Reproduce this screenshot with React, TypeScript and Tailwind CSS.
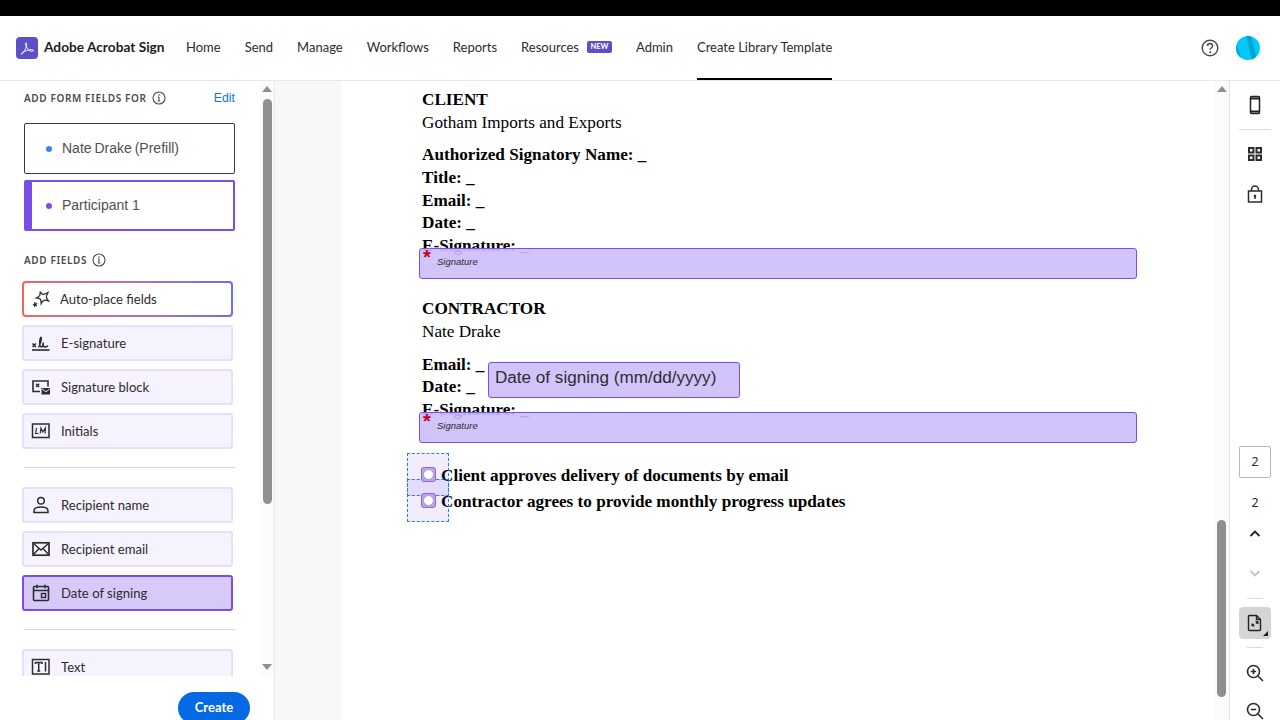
import React from "react";

const clean = "font-['Lato','Noto_Sans',sans-serif]";

const Svg = ({ children, size = 20, className = "" }: { children: React.ReactNode; size?: number; className?: string }) => (
  <svg width={size} height={size} viewBox="0 0 20 20" fill="none" stroke="currentColor" strokeWidth={1.5} className={`shrink-0 ${className}`}>
    {children}
  </svg>
);

const Info = () => (
  <svg width="14" height="14" viewBox="0 0 14 14" fill="none" stroke="#4b4b4b" className="shrink-0">
    <circle cx="7" cy="7" r="6" strokeWidth="1.1" />
    <path d="M7 6v3.6M5.8 10h2.4M5.900 6H7" strokeWidth="1.1" />
    <circle cx="7" cy="4" r="0.8" fill="#4b4b4b" stroke="none" />
  </svg>
);

const icons: Record<string, React.ReactNode> = {
  esig: (
    <Svg>
      <path d="M1 17h17.500" strokeWidth="1.600" />
      <path d="M1.500 10.500l3.500 3.500M5 10.500L1.500 14" strokeWidth="1.500" />
      <path d="M7.500 14.500c1.500-3 3.200-8 2.700-10-.5-1.400-2 3-1.500 6.500.3 2 1 3 2 3s1.300-3 1.600-4.500c-.3 2.500 0 4 1 4.500 1 .3 2.700-.5 3.700-1" strokeWidth="1.400" />
    </Svg>
  ),
  block: (
    <Svg>
      <path d="M9 14.500H2V4h15v5.500" strokeWidth="1.600" />
      <path d="M5 6.800l3.200 3.200M8.200 6.800L5 10" strokeWidth="1.400" />
      <rect x="10.500" y="11" width="8.500" height="6.500" fill="currentColor" stroke="none" />
      <path d="M11 12l4 2.800 3.500-2.800" stroke="#fff" strokeWidth="0.900" />
    </Svg>
  ),
  initials: (
    <Svg>
      <rect x="1.500" y="3" width="16.500" height="13.500" strokeWidth="1.500" />
      <path d="M5.500 7l-.8 5.500h2.800M9.200 12.500l.8-5.500 1.800 4 2.600-4 -.3 5.500" strokeWidth="1.200" />
    </Svg>
  ),
  user: (
    <Svg>
      <circle cx="10" cy="5.800" r="3.300" strokeWidth="1.500" />
      <path d="M3 17.500v-1.500c0-2.500 2.500-4 7-4s7 1.500 7 4v1.500z" strokeWidth="1.500" />
    </Svg>
  ),
  mail: (
    <Svg>
      <rect x="2" y="3.800" width="16" height="12.400" strokeWidth="1.700" />
      <path d="M2.500 4.500L10 11l7.500-6.500M2.500 15.500l5.500-6M17.500 15.500l-5.500-6" strokeWidth="1.400" />
    </Svg>
  ),
  cal: (
    <Svg>
      <rect x="2.500" y="3.500" width="15" height="14" rx="1" strokeWidth="1.600" />
      <path d="M2.500 7.500h15M6 1.800v3.400M14 1.800v3.400" strokeWidth="1.600" />
      <rect x="10.500" y="10.500" width="4" height="4" strokeWidth="1.400" />
    </Svg>
  ),
  text: (
    <Svg>
      <rect x="1.500" y="2.500" width="16.500" height="14.500" strokeWidth="1.500" />
      <path d="M4.500 7V5.500h6.500V7M7.700 5.500v8.500M6.200 14h3M14.500 5v9.500" strokeWidth="1.500" />
    </Svg>
  ),
  auto: (
    <Svg>
      <path d="M9 2.500c.8 1.800 1.800 2.800 3 2.800s2.700-.6 5-1.800c-1.200 2.300-1.800 3.700-1.600 4.800.2 1.100 1 2.200 2.100 3.700-2-.6-3.500-1-4.500-.7-1 .3-1.800 1.500-2.800 3.200 0-2.200-.2-3.700-1-4.500-.8-.8-2-1-3.700-1.200 1.700-.8 2.800-1.500 3.300-2.600.4-1 .5-2.300.2-3.700z" strokeWidth="1.300" />
      <path d="M3.500 13.200l.9 1.300 1.500-.3-.7 1.400.8 1.300-1.500-.2-1 1.200-.2-1.600-1.400-.5 1.400-.7z" fill="currentColor" strokeWidth="0.700" />
    </Svg>
  ),
};

function FieldButton({ icon, label, active }: { icon: string; label: string; active?: boolean }) {
  return (
    <div
      className={`flex h-9 w-[211px] items-center gap-[10px] rounded-[3px] border-2 pl-[7px] text-[13.100px] text-[#2c2c2c] ${
        active ? "border-[#7a4de8] bg-[#d8c9fb]" : "border-[#e6dffc] bg-[#f6f3fe]"
      }`}
    >
      <span className="text-[#2c2c2c]">{icons[icon]}</span>
      <span className="pt-[2px]">{label}</span>
    </div>
  );
}

const NavItem = ({ label, active }: { label: string; active?: boolean }) => (
  <div className="relative flex h-full items-center">
    <span>{label}</span>
    {active && <span className="absolute bottom-0 left-0 right-0 h-[2px] bg-black" />}
  </div>
);

const Arrow = ({ up }: { up?: boolean }) => (
  <div className={`h-0 w-0 border-x-[5px] border-x-transparent ${up ? "border-b-[6px] border-b-[#8f8f8f]" : "border-t-[6px] border-t-[#8f8f8f]"}`} />
);

function Header() {
  return (
    <header className={`flex h-[65px] shrink-0 items-center border-b border-[#e8e8e8] bg-white pl-4 pr-5 text-[13px] text-[#2c2c2c] ${clean}`}>
      <div className="flex h-[22px] w-[22px] items-center justify-center rounded-[4px] bg-[#5c4fc7]">
        <svg width="15" height="15" viewBox="0 0 16 16" fill="none" stroke="#fff" strokeWidth="1">
          <path d="M1.500 14c1.500-.6 3-2.600 4.500-6 .8-2 1.200-4 1-5.300-.2-1.200-1.200-.9-1.100.3.200 2.500 2.800 6.600 5 7.500 1.600.6 3.800.4 3.600-.5-.2-.9-3-.9-5.500-.4-2.700.6-6.500 2.300-7.500 3.800-.5.700-.4 1 0 .6z" />
        </svg>
      </div>
      <span className="ml-[6px] w-[121px] whitespace-nowrap pb-[1px] text-[13.700px] font-bold text-[#1d1d1d]">Adobe Acrobat Sign</span>
      <nav className="ml-[21px] flex h-full items-center gap-[24px]">
        <NavItem label="Home" />
        <NavItem label="Send" />
        <NavItem label="Manage" />
        <NavItem label="Workflows" />
        <NavItem label="Reports" />
        <div className="flex items-center gap-2">
          <span>Resources</span>
          <span className="mb-[3px] flex h-[12px] w-[25px] items-center justify-center rounded-[2px] bg-[#5c4fc7] text-[7.500px] font-bold text-white">NEW</span>
        </div>
        <NavItem label="Admin" />
        <NavItem label="Create Library Template" active />
      </nav>
      <div className="ml-auto flex items-center gap-[17px]">
        <svg width="18" height="18" viewBox="0 0 18 18" fill="none" stroke="#4b4b4b" strokeWidth="1.400">
          <circle cx="9" cy="9" r="7.800" />
          <path d="M6.500 7c0-1.500 1.100-2.500 2.600-2.500S11.600 5.500 11.600 7c0 1.700-2.500 1.900-2.500 3.800" />
          <circle cx="9.100" cy="13.200" r="1" fill="#4b4b4b" stroke="none" />
        </svg>
        <svg width="24" height="24" viewBox="0 0 24 24">
          <defs>
            <clipPath id="av"><circle cx="12" cy="12" r="12" /></clipPath>
          </defs>
          <g clipPath="url(#av)">
            <rect width="24" height="24" fill="#00c8fa" />
            <path d="M10 0h5l6 24h-5z" fill="#00a4cf" />
            <path d="M0 8l6 16H0z" fill="#00a4cf" />
          </g>
        </svg>
      </div>
    </header>
  );
}

function Sidebar() {
  return (
    <aside className={`flex w-[275px] shrink-0 flex-col border-r border-[#e8e8e8] bg-white ${clean}`}>
      <div className="flex min-h-0 flex-1">
        <div className="min-w-0 flex-1 overflow-hidden">
          <div className="w-[235px] pl-[24px] pr-0 pt-[10px]">
            <div className="flex h-[14px] items-center font-['Noto_Sans',sans-serif] text-[10px] font-semibold tracking-[0.62px] text-[#4b4b4b]">
              <span className="mr-[5px] whitespace-nowrap">ADD FORM FIELDS FOR</span>
              <Info />
              <span className="ml-auto font-['Liberation_Sans',sans-serif] text-[12.300px] font-normal tracking-normal text-[#1473e6]">Edit</span>
            </div>
            <div className="mt-[18px] flex h-[51px] items-center rounded-[2px] border border-[#3a3a3a] pl-[21px] font-['Liberation_Sans',sans-serif] text-[14px] text-[#505050] [word-spacing:-1px]">
              <span className="mr-[10px] h-[6px] w-[6px] rounded-full bg-[#3b82f6]" />
              Nate Drake (Prefill)
            </div>
            <div className="mt-[6px] flex h-[51px] items-center rounded-[2px] border-2 border-l-[8px] border-[#7a4de8] pl-[14px] font-['Liberation_Sans',sans-serif] text-[14px] text-[#505050]">
              <span className="mr-[10px] h-[6px] w-[6px] rounded-full bg-[#7a4de8]" />
              Participant 1
            </div>
            <div className="mt-[22px] flex h-[14px] items-center font-['Noto_Sans',sans-serif] text-[10px] font-semibold tracking-[0.62px] text-[#4b4b4b]">
              <span className="mr-[5px] whitespace-nowrap">ADD FIELDS</span>
              <Info />
            </div>
            <div className="-ml-[2px] mt-[14px] flex flex-col gap-2">
              <div className="h-9 w-[211px] rounded-[4px] bg-gradient-to-r from-[#f4625a] to-[#6a6cf6] p-[2px]">
                <div className="flex h-full items-center gap-[9px] rounded-[2px] bg-white pl-[7px] text-[13.100px] text-[#2c2c2c]">
                  <span className="text-[#2c2c2c]">{icons.auto}</span>
                  <span className="pt-[2px]">Auto-place fields</span>
                </div>
              </div>
              <FieldButton icon="esig" label="E-signature" />
              <FieldButton icon="block" label="Signature block" />
              <FieldButton icon="initials" label="Initials" />
            </div>
            <div className="mb-[19px] mt-[18px] h-px w-[211px] bg-[#d8d8d8]" />
            <div className="-ml-[2px] flex flex-col gap-2">
              <FieldButton icon="user" label="Recipient name" />
              <FieldButton icon="mail" label="Recipient email" />
              <FieldButton icon="cal" label="Date of signing" active />
            </div>
            <div className="mb-[19px] mt-[18px] h-px w-[211px] bg-[#d8d8d8]" />
            <div className="-ml-[2px]">
              <FieldButton icon="text" label="Text" />
            </div>
          </div>
        </div>
        <div className="flex w-[14px] shrink-0 flex-col items-center bg-[#fbfbfb] pt-[5px]">
          <Arrow up />
          <div className="mt-[7px] h-[405px] w-[9px] rounded-full bg-[#8f8f8f]" />
          <div className="mt-auto mb-[6px]"><Arrow /></div>
        </div>
      </div>
      <div className="flex h-[44px] shrink-0 items-start justify-end pr-[24px] pt-[16px]">
        <div className="flex h-[32px] w-[72px] shrink-0 items-center justify-center rounded-full bg-[#0469e3] text-[13px] font-bold text-white">Create</div>
      </div>
    </aside>
  );
}

const SigField = ({ top }: { top: string }) => (
  <div className={`absolute left-[78px] h-[31px] w-[718px] rounded-[3px] border border-[#7a4de8] bg-[#cbbefa]/90 ${top}`}>
    <span className="absolute left-[3px] -top-[2px] font-['Liberation_Sans',sans-serif] text-[20px] font-bold leading-[20px] text-[#c40018]">*</span>
    <span className="absolute left-[17px] top-[7px] font-['Liberation_Sans',sans-serif] text-[9.500px] italic leading-[12px] text-[#2c2c2c]">Signature</span>
  </div>
);

function Doc() {
  return (
    <div className="relative flex-1 overflow-hidden bg-white pl-[81px] pt-[7px] font-['Liberation_Serif',serif] text-[17.170px] leading-[23px] text-black">
      <p className="font-bold">CLIENT</p>
      <p>Gotham Imports and Exports</p>
      <div className="mt-[9px] font-bold">
        <p>Authorized Signatory Name: _</p>
        <p>Title: _</p>
        <p>Email: _</p>
        <p className="-mt-px">Date: _</p>
        <p>E-Signature: _</p>
      </div>
      <p className="mt-[40px] font-bold">CONTRACTOR</p>
      <p>Nate Drake</p>
      <div className="mt-[10px] font-bold">
        <p>Email: _</p>
        <p className="-mt-px">Date: _</p>
        <p>E-Signature: _</p>
      </div>
      <div className="ml-[19px] mt-[43px] font-bold">
        <p>Client approves delivery of documents by email</p>
        <p className="mt-[3px]">Contractor agrees to provide monthly progress updates</p>
      </div>

      <SigField top="top-[167px]" />
      <SigField top="top-[331px]" />
      <div className="absolute left-[147px] top-[281px] flex h-[36px] w-[252px] items-center rounded-[3px] border border-[#7a4de8] bg-[#d0c4fb] pb-[4px] pl-[6px] font-['Liberation_Sans',sans-serif] text-[17.100px] leading-[20px] text-[#2c2c2c]">
        Date of signing (mm/dd/yyyy)
      </div>
      {[372, 398].map((t, i) => (
        <div key={t} className={`absolute left-[66px] h-[43px] w-[42px] border border-dashed border-[#1f7ef0] bg-[#7a4de8]/10 ${i === 0 ? "top-[372px]" : "top-[398px]"}`} />
      ))}
      {[386, 412].map((t, i) => (
        <div
          key={t}
          className={`absolute left-[80px] flex h-[15px] w-[15px] items-center justify-center rounded-[3px] border border-[#8a63ec] bg-[#b8a6f5] ${i === 0 ? "top-[386px]" : "top-[412px]"}`}
        >
          <span className="h-[11px] w-[11px] rounded-full border-[1.500px] border-[#a0a0a0] bg-white" />
        </div>
      ))}
    </div>
  );
}

function Rail() {
  return (
    <aside className="flex w-[51px] shrink-0 flex-col items-center overflow-hidden border-l border-[#e2e2e2] bg-white pt-[14px] text-[#2c2c2c]">
      <svg className="shrink-0" width="20" height="20" viewBox="0 0 20 20" fill="none" stroke="#222" strokeWidth="1.500">
        <rect x="5.500" y="1.500" width="9" height="17" rx="1" />
        <path d="M5.500 3.500h9M5.500 16.500h9" strokeWidth="2" />
      </svg>
      <div className="mt-[14px] h-px w-8 shrink-0 bg-[#dcdcdc]" />
      <svg className="mt-[14px] shrink-0" width="20" height="20" viewBox="0 0 20 20" fill="none" stroke="#2c2c2c" strokeWidth="2">
        <rect x="4" y="4" width="4.500" height="4.500" />
        <rect x="11.500" y="4" width="4.500" height="4.500" />
        <rect x="4" y="11.500" width="4.500" height="4.500" />
        <rect x="11.500" y="11.500" width="4.500" height="4.500" />
      </svg>
      <svg className="mt-[20px] shrink-0" width="20" height="20" viewBox="0 0 20 20" fill="none" stroke="#2c2c2c" strokeWidth="1.500">
        <rect x="3.500" y="7" width="13" height="11" />
        <path d="M6.500 7V5.500a3.500 3.500 0 017 0V7" />
        <circle cx="10" cy="12" r="1.300" fill="#2c2c2c" stroke="none" />
        <path d="M10 12v3" />
      </svg>
      <div className="mt-[242px] flex h-[32px] w-[32px] shrink-0 items-center justify-center rounded-[2px] border border-[#b8b8b8] font-['Noto_Sans',sans-serif] text-[12.500px] text-[#2c2c2c]">2</div>
      <div className="mt-[16px] shrink-0 font-['Noto_Sans',sans-serif] text-[12.500px] leading-[17px] text-[#2c2c2c]">2</div>
      <svg className="mt-[13px] shrink-0" width="20" height="20" viewBox="0 0 20 20" fill="none" stroke="#222" strokeWidth="1.800">
        <path d="M5.500 12l4.500-4.500 4.500 4.500" />
      </svg>
      <svg className="mt-[19px] shrink-0" width="20" height="20" viewBox="0 0 20 20" fill="none" stroke="#c4c4c4" strokeWidth="1.800">
        <path d="M5.500 8l4.500 4.500L14.500 8" />
      </svg>
      <div className="mt-[15px] h-px w-4 shrink-0 bg-[#dcdcdc]" />
      <div className="relative mt-[8px] flex h-[32px] w-[32px] shrink-0 items-center justify-center rounded-[4px] bg-[#d5d5d5]">
        <svg width="20" height="20" viewBox="0 0 20 20" fill="none" stroke="#222" strokeWidth="1.400">
          <path d="M4.500 2.500h7l4 4v10c0 .6-.4 1-1 1h-10c-.6 0-1-.4-1-1v-13c0-.6.400-1 1-1z" />
          <path d="M11.500 2.500v4h4" />
          <path d="M7 13v-2.500M7 13h2.500M13 8.500v2.500M13 8.500h-2.500M7 13l2-2M13 8.500l-2 2" strokeWidth="1.200" />
        </svg>
        <span className="absolute bottom-[3px] right-[3px] h-0 w-0 border-b-[5px] border-l-[5px] border-b-[#222] border-l-transparent" />
      </div>
      <div className="mt-[8px] h-px w-4 shrink-0 bg-[#dcdcdc]" />
      <svg className="mt-[15px] shrink-0" width="20" height="20" viewBox="0 0 20 20" fill="none" stroke="#2c2c2c" strokeWidth="1.600">
        <circle cx="8.500" cy="8.500" r="6" />
        <path d="M13 13l5 5M5.800 8.500h5.400M8.500 5.800v5.400" />
      </svg>
      <svg className="mt-[18px] shrink-0" width="20" height="20" viewBox="0 0 20 20" fill="none" stroke="#2c2c2c" strokeWidth="1.600">
        <circle cx="8.500" cy="8.500" r="6" />
        <path d="M13 13l5 5M5.800 8.500h5.400" />
      </svg>
    </aside>
  );
}

export default function App() {
  return (
    <div className="flex h-[720px] w-[1280px] flex-col overflow-hidden bg-white">
      <div className="h-4 shrink-0 bg-black" />
      <Header />
      <div className="flex min-h-0 flex-1">
        <Sidebar />
        <div className="w-[66px] shrink-0 bg-[#f8f8f8]" />
        <Doc />
        <div className="flex w-[15px] shrink-0 flex-col items-center bg-[#fbfbfb] pt-[5px]">
          <Arrow up />
          <div className="mt-[428px] h-[177px] w-[9px] rounded-full bg-[#8f8f8f]" />
        </div>
        <Rail />
      </div>
    </div>
  );
}
